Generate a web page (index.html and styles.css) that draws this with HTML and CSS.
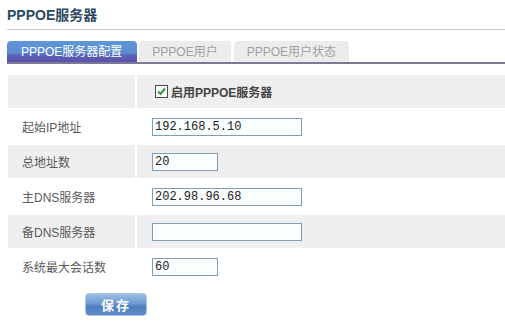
FILE: index.html
```html
<!DOCTYPE html>
<html lang="zh-CN">
<head>
    <meta charset="UTF-8">
    <title>PPPOE服务器</title>
    <link rel="stylesheet" href="styles.css">
</head>
<body>

<div class="page">
    <h1 class="title">PPPOE服务器</h1>

    <!-- Tabs -->
    <div class="tabs">
        <span class="tab active">PPPOE服务器配置</span>
        <span class="tab">PPPOE用户</span>
        <span class="tab">PPPOE用户状态</span>
    </div>

    <!-- Settings form -->
    <table class="form-table">
        <tr class="odd">
            <td class="label"></td>
            <td class="value">
                <label class="check">
                    <span class="box">
                        <svg width="11" height="11" viewBox="0 0 11 11"><path d="M2 5.5 L4.5 8 L9 2.5" fill="none" stroke="#2f9a32" stroke-width="2"/></svg>
                    </span>
                    启用PPPOE服务器
                </label>
            </td>
        </tr>
        <tr>
            <td class="label">起始IP地址</td>
            <td class="value"><input type="text" class="field" value="192.168.5.10"></td>
        </tr>
        <tr class="odd">
            <td class="label">总地址数</td>
            <td class="value"><input type="text" class="field short" value="20"></td>
        </tr>
        <tr>
            <td class="label">主DNS服务器</td>
            <td class="value"><input type="text" class="field" value="202.98.96.68"></td>
        </tr>
        <tr class="odd">
            <td class="label">备DNS服务器</td>
            <td class="value"><input type="text" class="field" value=""></td>
        </tr>
        <tr>
            <td class="label">系统最大会话数</td>
            <td class="value"><input type="text" class="field short" value="60"></td>
        </tr>
    </table>

    <button class="save">保存</button>
</div>

</body>
</html>
```

FILE: styles.css
```css
/* Page and heading */
body {
    margin: 0;
    font-family: "Liberation Sans", "Noto Sans CJK SC", sans-serif;
    font-size: 12px;
    color: #555;
    background: #fff;
}

.page {
    padding: 7px 0 0 7px;
}

.title {
    margin: 0;
    padding-bottom: 6px;
    font-size: 14px;
    line-height: 16px;
    font-weight: bold;
    color: #2d4a62;
    border-bottom: 1px solid #cbcbcb;
}

/* Tabs */
.tabs {
    display: flex;
    margin-top: 11px;
    border-bottom: 2px solid #7a7a96;
}

.tab {
    height: 21px;
    line-height: 22px;
    padding: 0 13px;
    margin-right: 3px;
    background: #ececec;
    color: #a0a0a0;
    border-radius: 4px 4px 0 0;
}

.tab.active {
    padding: 0 15px 0 14px;
    margin-right: 2px;
    color: #fff;
    background: linear-gradient(to bottom, #6097d8 0%, #5b8dd0 55%, #5a5fb6 70%, #5953ae 100%);
}

/* Form table */
.form-table {
    width: calc(100% + 3px);
    margin: 9px 0 0 -1px;
    border-spacing: 2px;
}

.form-table td {
    height: 33px;
    padding: 0;
}

.form-table tr.odd td {
    background: #efefef;
}

.form-table .label {
    width: 113px;
    padding-left: 14px;
    color: #5a5a5a;
}

.form-table .value {
    padding-left: 15px;
}

.check {
    display: flex;
    align-items: center;
    font-weight: bold;
    color: #444;
}

.box {
    display: inline-flex;
    align-items: center;
    justify-content: center;
    width: 11px;
    height: 11px;
    margin: 0 3px 0 3px;
    border: 1px solid #3d4b5a;
    background: #fff;
}

.field {
    box-sizing: border-box;
    width: 150px;
    height: 18px;
    padding: 0 2px;
    border: 1px solid #7f9db9;
    background: #fbfeff;
    font-family: "Liberation Mono", monospace;
    font-size: 12px;
    color: #222;
    vertical-align: middle;
}

.field.short {
    width: 66px;
}

/* Save button */
.save {
    display: block;
    width: 62px;
    height: 23px;
    margin: 8px 0 0 78px;
    padding: 0;
    border: 1px solid #a9c2e0;
    border-radius: 4px;
    background: linear-gradient(to bottom, #9cbde6 0%, #6f9ad2 45%, #4f7fc0 60%, #5d8bc8 100%);
    color: #fff;
    font-family: "Noto Sans CJK SC", sans-serif;
    font-size: 13px;
    font-weight: bold;
    letter-spacing: 2px;
    cursor: pointer;
}
```
